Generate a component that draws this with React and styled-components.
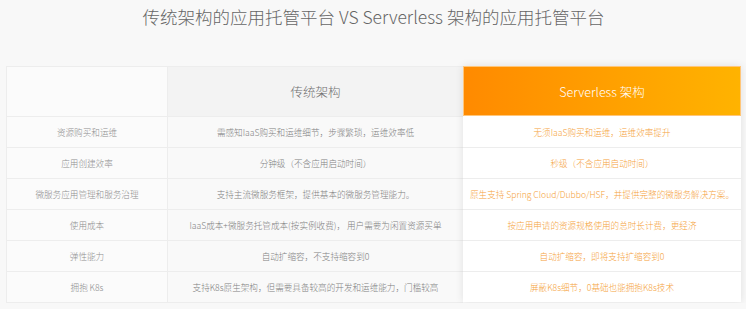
import styled, { createGlobalStyle } from "styled-components"

const GlobalStyle = createGlobalStyle`
    body {
        margin: 0;
        background: #f8f8f8;
        font-family: "Noto Sans CJK SC", "Liberation Sans", sans-serif;
    }
`

const rows = [
    ["资源购买和运维", "需感知IaaS购买和运维细节，步骤繁琐，运维效率低", "无须IaaS购买和运维，运维效率提升"],
    ["应用创建效率", "分钟级（不含应用启动时间）", "秒级（不含应用启动时间）"],
    ["微服务应用管理和服务治理", "支持主流微服务框架，提供基本的微服务管理能力。", "原生支持 Spring Cloud/Dubbo/HSF，并提供完整的微服务解决方案。"],
    ["使用成本", "IaaS成本+微服务托管成本(按实例收费)， 用户需要为闲置资源买单", "按应用申请的资源规格使用的总时长计费，更经济"],
    ["弹性能力", "自动扩缩容，不支持缩容到0", "自动扩缩容，即将支持扩缩容到0"],
    ["拥抱 K8s", "支持K8s原生架构，但需要具备较高的开发和运维能力，门槛较高", "屏蔽K8s细节，0基础也能拥抱K8s技术"],
]

const Page = styled.div`
    padding: 6px 5px 0 6px;
`

const Title = styled.h1`
    margin: 0;
    height: 60px;
    line-height: 22px;
    font-size: 17.5px;
    font-weight: 300;
    color: #666;
    text-align: center;
`

const Table = styled.div`
    display: flex;
    width: 735px;
`

const Plain = styled.div`
    display: grid;
    grid-template-columns: 161px 295px;
    border: 1px solid #ededed;
    border-right: none;
    flex: none;
`

const Cell = styled.div`
    display: flex;
    align-items: center;
    justify-content: center;
    height: 30px;
    border-bottom: 1px solid #ededed;
    border-right: ${p => (p.$first ? "1px solid #ededed" : "none")};
    background: ${p => (p.$first ? "#fbfbfb" : "#f9f9f9")};
    color: ${p => (p.$first ? "#8e8e8e" : "#808080")};
    font-size: 8.6px;
    font-weight: 300;
    white-space: nowrap;

    &:nth-last-child(-n + 2) {
        border-bottom: none;
    }
`

const Head = styled(Cell)`
    height: 49px;
    font-size: 12.5px;
    color: #707070;
    background: ${p => (p.$first ? "#fbfbfb" : "#f3f3f3")};
`

const Featured = styled.div`
    flex: 1;
    background: #fff;
    box-shadow: 0 0 8px rgba(0, 0, 0, 0.1);
    margin-bottom: 1px;
`

const FeaturedHead = styled.div`
    height: 50px;
    display: flex;
    align-items: center;
    justify-content: center;
    background: linear-gradient(to right, #ff8a00, #ffb300);
    border: 1px solid #ffc67a;
    box-sizing: border-box;
    color: #fff;
    font-size: 12.5px;
    font-weight: 300;
`

const FeaturedCell = styled.div`
    height: 30px;
    display: flex;
    align-items: center;
    justify-content: center;
    border-top: 1px solid #ededed;
    color: #f5a23a;
    font-size: 8.6px;
    font-weight: 300;
    white-space: nowrap;

    &:nth-child(2) {
        border-top: none;
        height: 31px;
    }
`

export default function App() {
    return (
        <Page>
            <GlobalStyle />
            <Title>传统架构的应用托管平台 VS Serverless 架构的应用托管平台</Title>
            <Table>
                <Plain>
                    <Head $first></Head>
                    <Head>传统架构</Head>
                    {rows.map(r => [
                        <Cell $first key={r[0] + "a"}>{r[0]}</Cell>,
                        <Cell key={r[0] + "b"}>{r[1]}</Cell>,
                    ])}
                </Plain>
                <Featured>
                    <FeaturedHead>Serverless 架构</FeaturedHead>
                    {rows.map(r => (
                        <FeaturedCell key={r[0]}>{r[2]}</FeaturedCell>
                    ))}
                </Featured>
            </Table>
        </Page>
    )
}
